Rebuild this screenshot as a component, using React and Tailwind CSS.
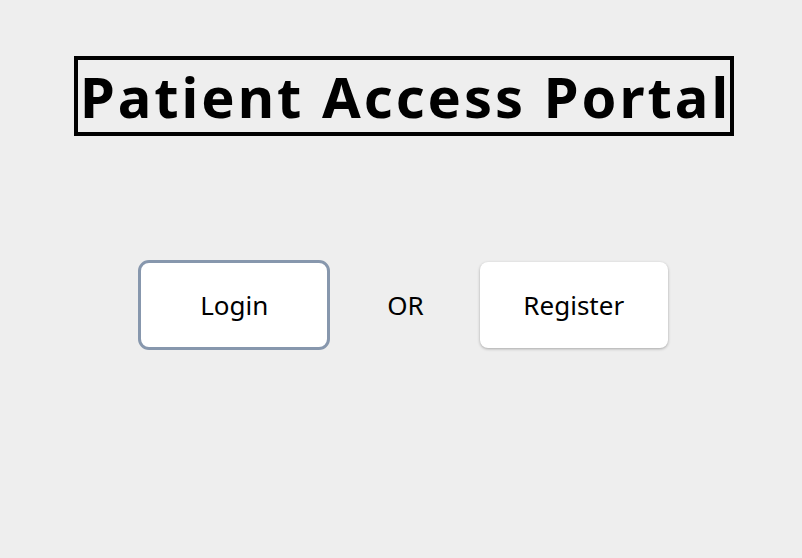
import React from "react";

const App = () => {
    return (
        <div className="min-h-screen w-full bg-[#eeeeee] flex flex-col items-center pt-[56px] font-['Noto_Sans',sans-serif]">
            <div className="border-4 border-black w-[660px] h-[80px] ml-[6px] flex items-center justify-center">
                <h1 className="text-[56px] font-bold text-black leading-none tracking-[3px] whitespace-nowrap pl-[3px]">Patient Access Portal</h1>
            </div>
            <div className="mt-[124px] flex items-center ml-[4px]">
                <button className="w-[192px] h-[90px] bg-white rounded-[11px] border-[3px] border-[#8797ad] text-[26px] text-black">
                    Login
                </button>
                <span className="ml-[57px] mr-[56px] text-[26px] text-black">OR</span>
                <button className="w-[188px] h-[86px] bg-white rounded-[8px] shadow-[0_1px_3px_rgba(0,0,0,0.3)] text-[26px] text-black">
                    Register
                </button>
            </div>
        </div>
    );
};

export default App;
